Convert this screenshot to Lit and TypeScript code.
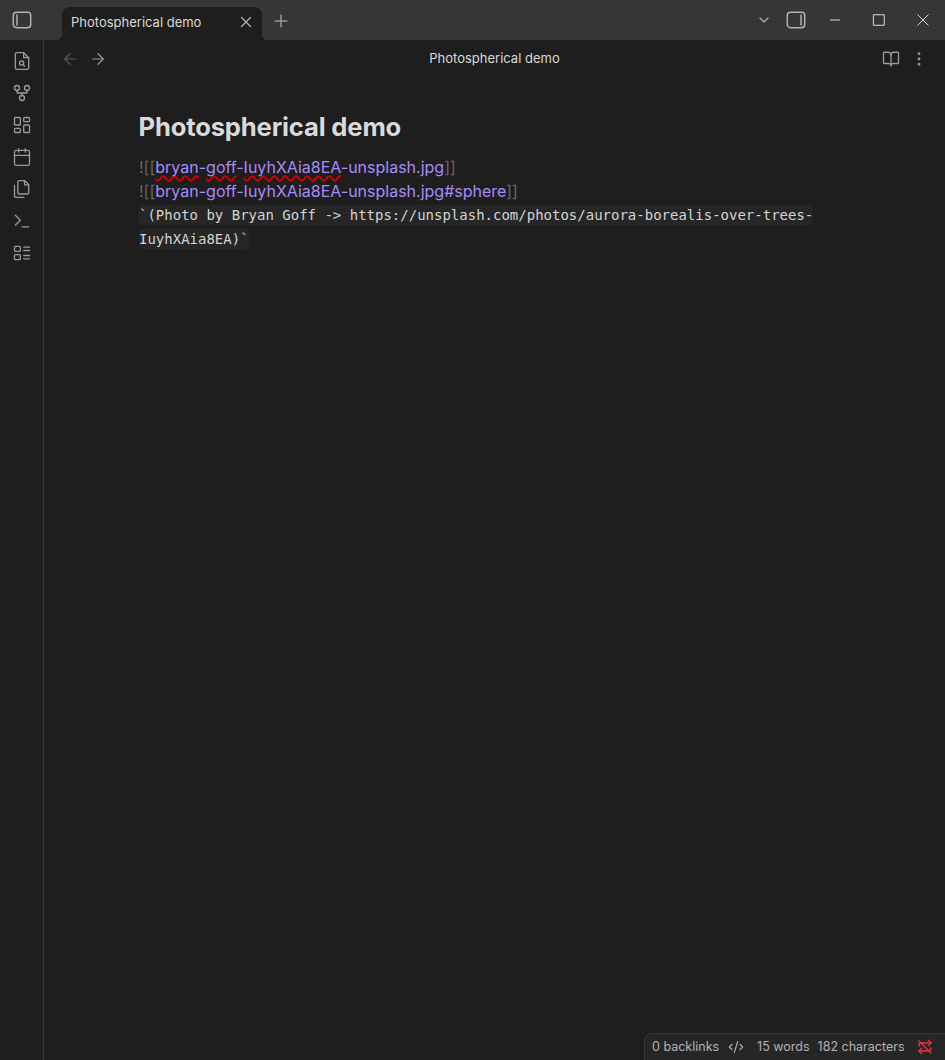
import { LitElement, html, css, svg } from "lit";
import { customElement } from "lit/decorators.js";

const icon = (paths: unknown, size = 20, sw = 1.6, cls = "") => html`<svg class="ic ${cls}" width=${size} height=${size} viewBox="0 0 24 24" fill="none" stroke="currentColor" stroke-width=${sw} stroke-linecap="round" stroke-linejoin="round">${paths}</svg>`;

const P = {
  sidebarLeft: svg`<rect x="2.5" y="3.5" width="19" height="17" rx="3.5"/><path d="M6.5 6.5v11"/>`,
  sidebarRight: svg`<rect x="2.5" y="3.5" width="19" height="17" rx="3.5"/><path d="M17.5 6.5v11"/>`,
  x: svg`<path d="M18 6 6 18"/><path d="m6 6 12 12"/>`,
  plus: svg`<path d="M5 12h14"/><path d="M12 5v14"/>`,
  chevron: svg`<path d="m6 9 6 6 6-6"/>`,
  left: svg`<path d="m12 19-7-7 7-7"/><path d="M19 12H5"/>`,
  right: svg`<path d="M5 12h14"/><path d="m12 5 7 7-7 7"/>`,
  book: svg`<path d="M12 7v14"/><path d="M3 18a1 1 0 0 1-1-1V4a1 1 0 0 1 1-1h5a4 4 0 0 1 4 4 4 4 0 0 1 4-4h5a1 1 0 0 1 1 1v13a1 1 0 0 1-1 1h-6a3 3 0 0 0-3 3 3 3 0 0 0-3-3z"/>`,
  more: svg`<circle cx="12" cy="12" r="1"/><circle cx="12" cy="5" r="1"/><circle cx="12" cy="19" r="1"/>`,
  fileSearch: svg`<path d="M14 2H6a2 2 0 0 0-2 2v16a2 2 0 0 0 2 2h12a2 2 0 0 0 2-2V8z"/><path d="M14 2v6h6"/><circle cx="11.5" cy="14.5" r="2.5"/><path d="M13.3 16.3 15 18"/>`,
  graph: svg`<circle cx="12" cy="18" r="3"/><circle cx="6" cy="6" r="3"/><circle cx="18" cy="6" r="3"/><path d="M18 9v2c0 .6-.4 1-1 1H7c-.6 0-1-.4-1-1V9"/><path d="M12 12v3"/>`,
  dashboard: svg`<rect width="7" height="9" x="3" y="3" rx="1"/><rect width="7" height="5" x="14" y="3" rx="1"/><rect width="7" height="9" x="14" y="12" rx="1"/><rect width="7" height="5" x="3" y="16" rx="1"/>`,
  calendar: svg`<path d="M8 2v4"/><path d="M16 2v4"/><rect width="18" height="18" x="3" y="4" rx="2"/><path d="M3 10h18"/>`,
  files: svg`<path d="M15.5 2H8.6c-.4 0-.8.2-1.1.5-.3.3-.5.7-.5 1.1v12.8c0 .4.2.8.5 1.1.3.3.7.5 1.1.5h9.8c.4 0 .8-.2 1.1-.5.3-.3.5-.7.5-1.1V6.5z"/><path d="M3 7.6v12.8c0 .4.2.8.5 1.1.3.3.7.5 1.1.5h9.8"/><path d="M15 2v5h5"/>`,
  terminal: svg`<path d="m4 17 6-6-6-6"/><path d="M12 19h8"/>`,
  todo: svg`<rect x="3" y="4" width="7" height="6" rx="1"/><rect x="3" y="14" width="7" height="6" rx="1"/><path d="M14 5h7"/><path d="M14 9h7"/><path d="M14 15h7"/><path d="M14 19h7"/>`,
  code: svg`<path d="m18 16 4-4-4-4"/><path d="m6 8-4 4 4 4"/><path d="m14.5 4-5 16"/>`,
  syncOff: svg`<path d="m17 2 4 4-4 4"/><path d="M3 11v-1a4 4 0 0 1 4-4h14"/><path d="m7 22-4-4 4-4"/><path d="M21 13v1a4 4 0 0 1-4 4H3"/><path d="m3 3 18 18"/>`,
};

@customElement("app-root")
export class AppRoot extends LitElement {
  static styles = css`
    :host { display: block; width: 945px; height: 1060px; font-family: Inter, sans-serif; background: #1e1e1e; color: #dadada; overflow: hidden; position: relative; }
    .ic { display: block; flex: none; }
    .titlebar { height: 40px; background: #363636; display: flex; box-sizing: border-box; color: #b3b3b3; }
    .corner { width: 44px; display: flex; align-items: center; justify-content: center; flex: none; }
    .tabs { margin-left: 18px; padding-top: 7px; display: flex; flex: 1; }
    .tab { position: relative; width: 200px; height: 33px; box-sizing: border-box; background: #1e1e1e; border-radius: 8px 8px 0 0; display: flex; align-items: center; justify-content: space-between; padding: 0 7px 3px 9px; font-size: 13px; color: #dadada; }
    .tab .ic { color: #b3b3b3; }
    .tab::before, .tab::after { content: ""; position: absolute; bottom: 0; width: 6px; height: 6px; }
    .tab::before { left: -6px; background: radial-gradient(circle at 0 0, transparent 6px, #1e1e1e 6.5px); }
    .tab::after { right: -6px; background: radial-gradient(circle at 100% 0, transparent 6px, #1e1e1e 6.5px); }
    .plus { margin: 0 0 5px 9px; align-self: center; color: #999; }
    .winbar { display: flex; align-items: center; flex: none; color: #dadada; }
    .chev { color: #b3b3b3; margin-right: 13px; }
    .srb { color: #b3b3b3; margin-right: 21px; }
    .min { margin-right: 30px; }
    .max { margin-right: 30px; }
    .close { margin-right: 15px; }
    .body { display: flex; height: 1020px; }
    .ribbon { width: 44px; flex: none; box-sizing: border-box; border-right: 1px solid #363636; display: flex; flex-direction: column; align-items: center; padding-top: 11px; gap: 12px; color: #999; }
    .main { flex: 1; min-width: 0; }
    .header { height: 37px; display: flex; align-items: center; padding: 0 17px; font-size: 13px; color: #b3b3b3; }
    .nav { display: flex; gap: 10px; width: 100px; }
    .nav .off { color: #5a5a5a; }
    .nav .on { color: #999; }
    .ttl { flex: 1; text-align: center; color: #dadada; padding-bottom: 1px; }
    .acts { display: flex; gap: 10px; color: #999; width: 100px; justify-content: flex-end; }
    .doc { margin: 0 0 0 95px; width: 700px; padding-top: 32px; }
    h1 { margin: 0 0 10px -0.5px; font-size: 25.6px; line-height: 36px; font-weight: 700; color: #dadada; letter-spacing: -0.17px; }
    .line { font-size: 16px; line-height: 24px; }
    .fm { color: #666; }
    .lnk { color: #a88bfa; }
    .sq { text-decoration: underline wavy #d40000 1.5px; text-underline-offset: 2px; text-decoration-skip-ink: none; }
    .mono { font-family: "DejaVu Sans Mono", monospace; font-size: 14px; }
    code { font-family: inherit; font-size: inherit; color: #d4d4d4; background: #262626; border-radius: 4px; padding: 2px 0; -webkit-box-decoration-break: clone; box-decoration-break: clone; }
    .status { position: absolute; right: 0; bottom: 0; height: 27px; width: 301px; box-sizing: border-box; display: flex; align-items: center; white-space: nowrap; background: #262626; border: 1px solid #363636; border-width: 1px 0 0 1px; border-radius: 8px 0 0 0; font-size: 12.5px; color: #b3b3b3; padding: 0 12px 1px 7px; }
    .bl { margin-right: 9px; }
    .words { margin-left: 13px; margin-right: 8px; }
    .chars { margin-right: 12px; }
    .sync { color: #e93147; }
  `;

  render() {
    return html`
      <div class="titlebar">
        <div class="corner">${icon(P.sidebarLeft, 22, 1.6)}</div>
        <div class="tabs">
          <div class="tab"><span>Photospherical demo</span>${icon(P.x, 18, 1.75)}</div>
          ${icon(P.plus, 20, 1.75, "plus")}
        </div>
        <div class="winbar">
          ${icon(P.chevron, 16, 1.75, "chev")}
          ${icon(P.sidebarRight, 22, 1.6, "srb")}
          ${icon(svg`<path d="M4 12h16"/>`, 14, 1.7, "min")}
          ${icon(svg`<rect x="3" y="3" width="18" height="18"/>`, 14, 1.7, "max")}
          ${icon(svg`<path d="M21 3 3 21"/><path d="m3 3 18 18"/>`, 14, 1.7, "close")}
        </div>
      </div>
      <div class="body">
        <nav class="ribbon">
          ${icon(P.fileSearch)}${icon(P.graph)}${icon(P.dashboard)}${icon(P.calendar)}${icon(P.files)}${icon(P.terminal)}${icon(P.todo)}
        </nav>
        <main class="main">
          <div class="header">
            <div class="nav"><span class="off">${icon(P.left, 18)}</span><span class="on">${icon(P.right, 18)}</span></div>
            <div class="ttl">Photospherical demo</div>
            <div class="acts">${icon(P.book, 18, 1.75)}${icon(P.more, 18, 1.75)}</div>
          </div>
          <article class="doc">
            <h1>Photospherical demo</h1>
            <div class="line"><span class="fm">![[</span><span class="lnk"><span class="sq">bryan</span>-<span class="sq">goff</span>-<span class="sq">IuyhXAia8EA</span>-unsplash.jpg</span><span class="fm">]]</span></div>
            <div class="line"><span class="fm">![[</span><span class="lnk">bryan-goff-IuyhXAia8EA-unsplash.jpg#sphere</span><span class="fm">]]</span></div>
            <div class="line mono"><code>\`(Photo by Bryan Goff -&gt; https://unsplash.com/photos/aurora-borealis-over-trees-IuyhXAia8EA)\`</code></div>
          </article>
        </main>
      </div>
      <footer class="status">
        <span class="bl">0 backlinks</span>
        ${icon(P.code, 16, 1.75)}
        <span class="words">15 words</span>
        <span class="chars">182 characters</span>
        ${icon(P.syncOff, 16, 2, "sync")}
      </footer>
    `;
  }
}
